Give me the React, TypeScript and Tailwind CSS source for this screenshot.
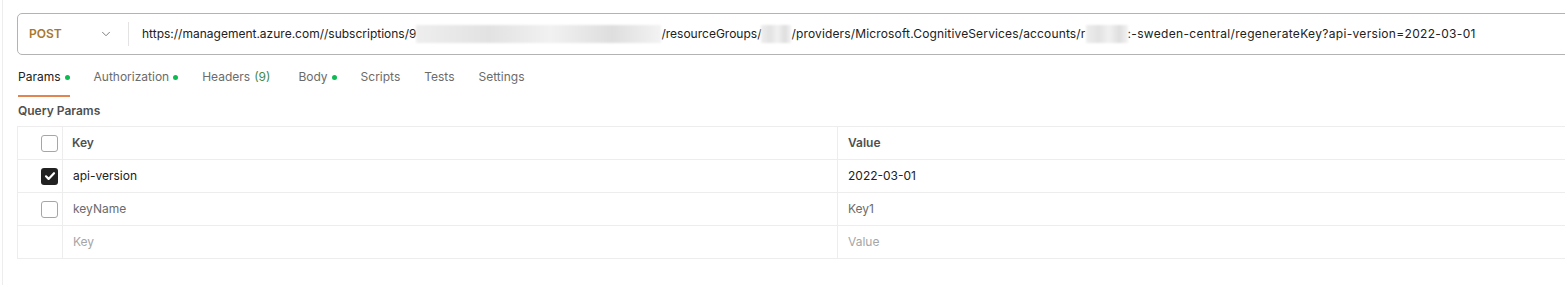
import { ChevronDown } from "lucide-react";

type Param = {
  key: string;
  value: string;
  checked: boolean;
};

const params: Param[] = [
  { key: "api-version", value: "2022-03-01", checked: true },
  { key: "keyName", value: "Key1", checked: false },
];

const tabs = [
  { label: "Params", dot: true, active: true },
  { label: "Authorization", dot: true },
  { label: "Headers", count: "(9)" },
  { label: "Body", dot: true },
  { label: "Scripts" },
  { label: "Tests" },
  { label: "Settings" },
];

function Blur({ w }: { w: string }) {
  return (
    <span className={`inline-block h-[18px] align-middle ${w} bg-[linear-gradient(90deg,#eeeeee,#e2e2e2_30%,#f1f1f1_55%,#dedede_80%,#f3f3f3)] blur-[1px]`} />
  );
}

function Checkbox({ checked }: { checked: boolean }) {
  if (checked) {
    return (
      <span className="flex h-[17px] w-[17px] items-center justify-center rounded-[3px] bg-[#212121]">
        <svg width="12" height="12" viewBox="0 0 12 12" fill="none">
          <path d="M2 6.3l2.6 2.6L10 3.2" stroke="white" strokeWidth="2.2" strokeLinecap="round" strokeLinejoin="round" />
        </svg>
      </span>
    );
  }
  return <span className="block h-[17px] w-[17px] rounded-[3px] border border-[#a6a6a6] bg-white" />;
}

export default function App() {
  return (
    <div className="h-[285px] w-[1565px] overflow-hidden bg-white font-['Inter',sans-serif] text-[12px]">
      <div className="ml-[2px] h-full border-l border-[#ededed] pl-[14px] pt-[13px]">
        {/* url bar */}
        <div className="flex h-[42px] w-[1600px] items-center rounded-[5px] border border-[#b3b3b3]">
          <div className="flex w-[110px] items-center justify-between pl-[11px] pr-[15px]">
            <span className="text-[12px] font-semibold text-[#a9782b]">POST</span>
            <ChevronDown size={14} strokeWidth={1.5} className="text-[#6b6b6b]" />
          </div>
          <div className="h-[24px] w-px bg-[#e3e3e3]" />
          <div className="flex items-center whitespace-nowrap pl-[13px] text-[#212121]">
            <span>https://management.azure.com//subscriptions/9</span>
            <Blur w="w-[245px]" />
            <span>/resourceGroups/</span>
            <Blur w="w-[30px]" />
            <span className="tracking-[0.15px]">/providers/Microsoft.CognitiveServices/accounts/r</span>
            <Blur w="w-[42px]" />
            <span className="tracking-[0.32px]">:-sweden-central/regenerateKey?api-version=2022-03-01</span>
          </div>
        </div>

        {/* tabs */}
        <div className="mt-[9px] flex h-[33px] items-stretch gap-[24px] pl-px">
          {tabs.map((t) => (
            <div
              key={t.label}
              className={`flex items-center gap-[4px] border-b-2 pb-[5px] ${t.active ? "border-[#e2844f] text-[#212121]" : "border-transparent text-[#6b6b6b]"} ${t.count ? "mr-[4px]" : ""}`}
            >
              <span>{t.label}</span>
              {t.count && <span className="text-[#3d8a4f]">{t.count}</span>}
              {t.dot && <span className="h-[5px] w-[5px] rounded-full bg-[#0cbb52]" />}
            </div>
          ))}
        </div>

        <div className="mt-[5px] pl-px text-[12px] font-semibold text-[#505050]">Query Params</div>

        {/* table */}
        <div className="mt-[6px] w-[1600px] border border-[#ededed]">
          <div className="flex h-[33px] border-b border-[#ededed]">
            <div className="flex w-[45px] items-center justify-end border-r border-[#ededed] pr-[4px]">
              <Checkbox checked={false} />
            </div>
            <div className="flex w-[775px] items-center border-r border-[#ededed] pl-[9px] font-semibold text-[#505050]">Key</div>
            <div className="flex flex-1 items-center pl-[10px] font-semibold text-[#505050]">Value</div>
          </div>
          {params.map((p) => (
            <div key={p.key} className="flex h-[33px] border-b border-[#ededed]">
              <div className="flex w-[45px] items-center justify-end border-r border-[#ededed] pr-[4px]">
                <Checkbox checked={p.checked} />
              </div>
              <div className={`flex w-[775px] items-center border-r border-[#ededed] pl-[10px] ${p.checked ? "text-[#212121]" : "text-[#6b6b6b]"}`}>{p.key}</div>
              <div className={`flex flex-1 items-center pl-[10px] ${p.checked ? "text-[#212121]" : "text-[#6b6b6b]"}`}>{p.value}</div>
            </div>
          ))}
          <div className="flex h-[32px]">
            <div className="w-[45px] border-r border-[#ededed]" />
            <div className="flex w-[775px] items-center border-r border-[#ededed] pl-[10px] text-[#a6a6a6]">Key</div>
            <div className="flex flex-1 items-center pl-[10px] text-[#a6a6a6]">Value</div>
          </div>
        </div>
      </div>
    </div>
  );
}
